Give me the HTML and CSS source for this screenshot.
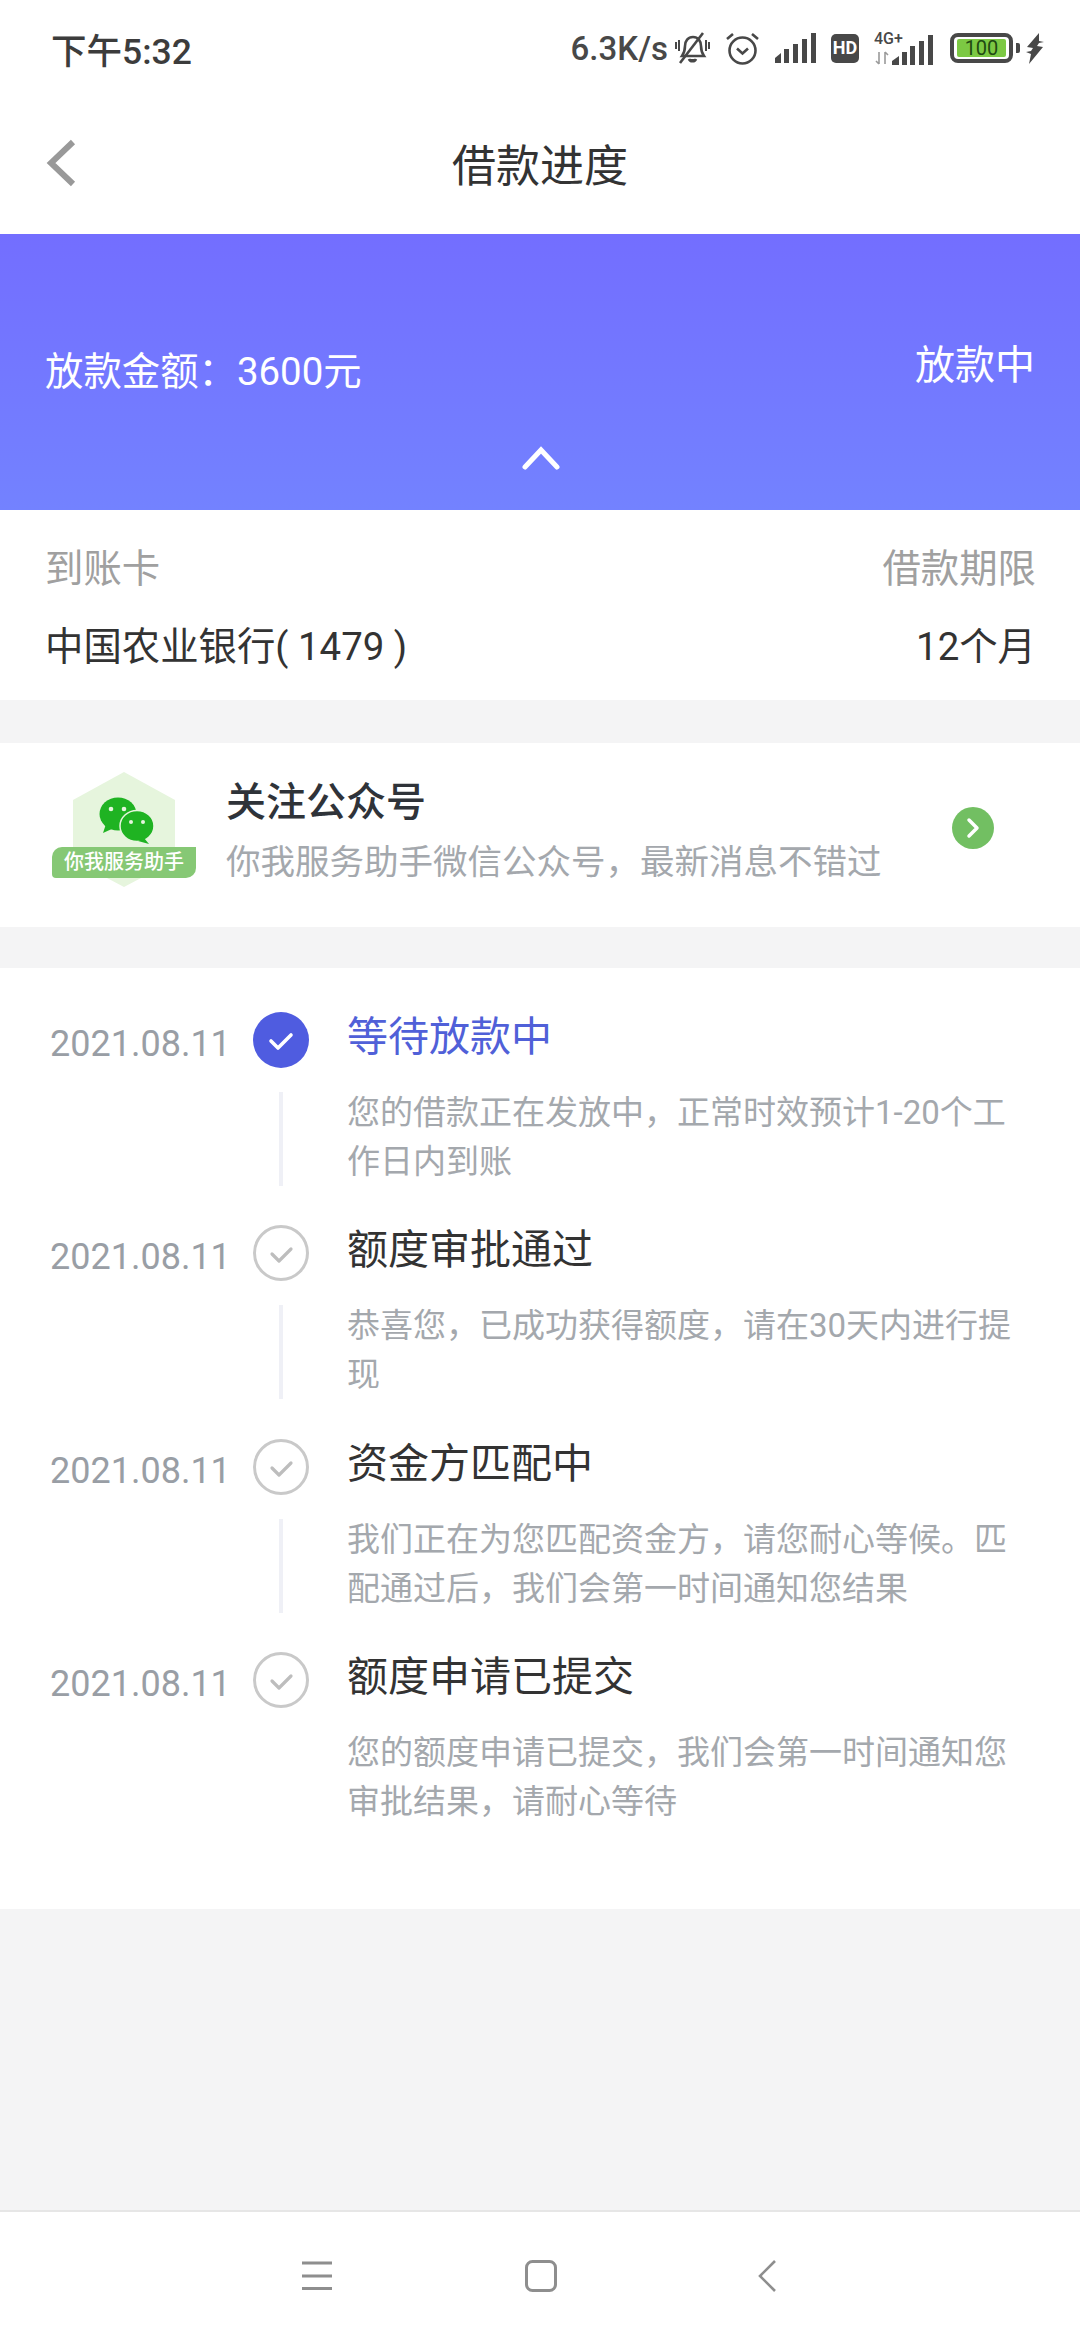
FILE: index.html
```html
<!DOCTYPE html>
<html>
<head>
  <meta charset="utf-8">
  <title>借款进度</title>
  <link rel="stylesheet" href="styles.css">
</head>
<body>
  <div class="page">

    <!-- status bar -->
    <div class="status">
      <span class="clock">下午5:32</span>
      <div class="status-right">
        <span class="speed">6.3K/s</span>
        <svg class="ico-bell" width="35" height="33" viewBox="0 0 35 33" fill="none" stroke="#484848" stroke-width="2.6">
          <path d="M7 24c2-3 3-5 3-10 0-5 3-9 8-9s8 4 8 9c0 5 1 7 3 10z"/>
          <path d="M14 27c1 3 6 3 7 0" fill="#484848"/>
          <path d="M28 1L5 31"/>
          <path d="M1 10v7M4 8v11M31 8v11M34 10v7" stroke-width="2"/>
        </svg>
        <svg class="ico-alarm" width="35" height="33" viewBox="0 0 35 33" fill="none" stroke="#484848" stroke-width="2.6">
          <circle cx="17.5" cy="18.5" r="13"/>
          <path d="M12 16.5l5.5 5 5.5-5"/>
          <path d="M2 7l6-5M33 7l-6-5"/>
        </svg>
        <svg class="ico-signal" width="41" height="30" viewBox="0 0 41 30" fill="#484848">
          <path d="M0 30v-5l6-5v10z"/>
          <rect x="9" y="16" width="5" height="14"/>
          <rect x="18" y="11" width="5" height="19"/>
          <rect x="27" y="6" width="5" height="24"/>
          <rect x="36" y="0" width="5" height="30"/>
        </svg>
        <svg class="ico-hd" width="28" height="29" viewBox="0 0 28 29">
          <rect width="28" height="29" rx="5" fill="#484848"/>
          <text x="14" y="20" class="hd-text">HD</text>
        </svg>
        <svg class="ico-net" width="59" height="33" viewBox="0 0 59 33" fill="#484848">
          <text x="0" y="12" class="net-text">4G+</text>
          <path d="M5 20v12M2 29l3 3M11 32V20M11 20l3 3" stroke="#9a9a9a" stroke-width="1.6" fill="none"/>
          <path d="M18 33v-4l7-5v9z"/>
          <rect x="28" y="20" width="5" height="13"/>
          <rect x="36" y="14" width="5" height="19"/>
          <rect x="45" y="9" width="5" height="24"/>
          <rect x="54" y="3" width="5" height="30"/>
        </svg>
        <div class="battery">
          <div class="battery-body"><span class="battery-level">100</span></div>
          <div class="battery-tip"></div>
        </div>
        <svg class="ico-bolt" width="18" height="31" viewBox="0 0 18 31" fill="#484848">
          <path d="M13 0L1 14l6 1-2 3-5 1 5 2-2 10L17 14l-6-1 2-3 5-1-5-1z"/>
        </svg>
      </div>
    </div>

    <!-- title -->
    <div class="nav">
      <svg class="nav-back" width="30" height="48" viewBox="0 0 30 48" fill="none" stroke="#999" stroke-width="6">
        <path d="M27 3L5 24l22 21"/>
      </svg>
      <span class="nav-title">借款进度</span>
    </div>

    <!-- amount -->
    <div class="hero">
      <div class="hero-row">
        <span class="hero-amount">放款金额：3600元</span>
        <span class="hero-state">放款中</span>
      </div>
      <svg class="hero-arrow" width="38" height="24" viewBox="0 0 38 24" fill="none" stroke="#fff" stroke-width="5" stroke-linecap="round">
        <path d="M3 21L19 4l16 17"/>
      </svg>
    </div>

    <div class="card-info">
      <div class="info-row info-label">
        <span>到账卡</span>
        <span>借款期限</span>
      </div>
      <div class="info-row info-value">
        <span>中国农业银行( 1479 )</span>
        <span>12个月</span>
      </div>
    </div>

    <!-- wechat banner -->
    <div class="follow">
      <svg class="follow-logo" width="144" height="115" viewBox="0 0 144 115">
        <path d="M72 0l51 28v60l-51 27-51-27V28z" fill="#e6f5dd"/>
        <ellipse cx="66" cy="42" rx="18.5" ry="16.5" fill="#1fb322"/>
        <path d="M54 52l-3 9 11-5z" fill="#1fb322"/>
        <circle cx="59" cy="37" r="2.3" fill="#e6f5dd"/>
        <circle cx="72" cy="37" r="2.3" fill="#e6f5dd"/>
        <ellipse cx="85" cy="54" rx="17" ry="15.5" fill="#1fb322" stroke="#e6f5dd" stroke-width="1.5"/>
        <path d="M92 66l5 6-11-3z" fill="#1fb322"/>
        <circle cx="79" cy="50" r="2" fill="#e6f5dd"/>
        <circle cx="91" cy="50" r="2" fill="#e6f5dd"/>
        <path d="M10 75h134v21a10 10 0 0 1-10 10H4a4 4 0 0 1-4-4V85a10 10 0 0 1 10-10z" fill="#86c875"/>
        <text x="72" y="97" class="logo-text">你我服务助手</text>
      </svg>
      <div class="follow-text">
        <div class="follow-title">关注公众号</div>
        <div class="follow-sub">你我服务助手微信公众号，最新消息不错过</div>
      </div>
      <svg class="follow-go" width="42" height="42" viewBox="0 0 42 42" fill="none">
        <circle cx="21" cy="21" r="21" fill="#72bf62"/>
        <path d="M17 13l8 8-8 8" stroke="#fff" stroke-width="3.5" stroke-linecap="round" stroke-linejoin="round"/>
      </svg>
    </div>

    <!-- progress -->
    <div class="steps">
      <div class="step step-active">
        <div class="step-date">2021.08.11</div>
        <div class="step-mark">
          <svg class="step-dot" width="56" height="56" viewBox="0 0 56 56" fill="none">
            <circle cx="28" cy="28" r="28" fill="#4f5ce0"/>
            <path d="M18 29l7 7 13-13" stroke="#fff" stroke-width="3.6" stroke-linecap="round" stroke-linejoin="round"/>
          </svg>
          <div class="step-line"></div>
        </div>
        <div class="step-body">
          <div class="step-title">等待放款中</div>
          <div class="step-desc">您的借款正在发放中，正常时效预计1-20个工作日内到账</div>
        </div>
      </div>

      <div class="step">
        <div class="step-date">2021.08.11</div>
        <div class="step-mark">
          <svg class="step-dot" width="56" height="56" viewBox="0 0 56 56" fill="none">
            <circle cx="28" cy="28" r="26.5" stroke="#c9c9c9" stroke-width="3"/>
            <path d="M19 29l7 7 12-12" stroke="#bdbdbd" stroke-width="3.2" stroke-linecap="round" stroke-linejoin="round"/>
          </svg>
          <div class="step-line"></div>
        </div>
        <div class="step-body">
          <div class="step-title">额度审批通过</div>
          <div class="step-desc">恭喜您，已成功获得额度，请在30天内进行提现</div>
        </div>
      </div>

      <div class="step">
        <div class="step-date">2021.08.11</div>
        <div class="step-mark">
          <svg class="step-dot" width="56" height="56" viewBox="0 0 56 56" fill="none">
            <circle cx="28" cy="28" r="26.5" stroke="#c9c9c9" stroke-width="3"/>
            <path d="M19 29l7 7 12-12" stroke="#bdbdbd" stroke-width="3.2" stroke-linecap="round" stroke-linejoin="round"/>
          </svg>
          <div class="step-line"></div>
        </div>
        <div class="step-body">
          <div class="step-title">资金方匹配中</div>
          <div class="step-desc">我们正在为您匹配资金方，请您耐心等候。匹配通过后，我们会第一时间通知您结果</div>
        </div>
      </div>

      <div class="step">
        <div class="step-date">2021.08.11</div>
        <div class="step-mark">
          <svg class="step-dot" width="56" height="56" viewBox="0 0 56 56" fill="none">
            <circle cx="28" cy="28" r="26.5" stroke="#c9c9c9" stroke-width="3"/>
            <path d="M19 29l7 7 12-12" stroke="#bdbdbd" stroke-width="3.2" stroke-linecap="round" stroke-linejoin="round"/>
          </svg>
        </div>
        <div class="step-body">
          <div class="step-title">额度申请已提交</div>
          <div class="step-desc">您的额度申请已提交，我们会第一时间通知您审批结果，请耐心等待</div>
        </div>
      </div>
    </div>

    <div class="spacer"></div>

    <!-- system buttons -->
    <div class="sysbar">
      <svg class="sys-menu" width="30" height="30" viewBox="0 0 30 30" fill="none" stroke="#8e8e8e" stroke-width="3">
        <path d="M0 2h30M0 15h30M0 27.5h30"/>
      </svg>
      <svg class="sys-home" width="32" height="32" viewBox="0 0 32 32" fill="none" stroke="#8e8e8e" stroke-width="3">
        <rect x="1.5" y="1.5" width="29" height="29" rx="6"/>
      </svg>
      <svg class="sys-back" width="18" height="32" viewBox="0 0 18 32" fill="none" stroke="#8e8e8e" stroke-width="2.6">
        <path d="M17 1L2 16l15 15"/>
      </svg>
    </div>

  </div>
</body>
</html>
```

FILE: styles.css
```css
* {
  box-sizing: border-box;
}

body {
  margin: 0;
  background-color: #f4f4f5;
  font-family: Roboto, "Noto Sans CJK SC", sans-serif;
  color: #333;
}

.page {
  width: 1080px;
  height: 2340px;
  display: flex;
  flex-direction: column;
  overflow: hidden;
}

/* status bar */
.status {
  height: 96px;
  padding: 0 36px 0 51px;
  background-color: #fff;
  display: flex;
  align-items: center;
  justify-content: space-between;
}

.clock {
  font-size: 35.5px;
  font-weight: 500;
  color: #3c3c3c;
}

.status-right {
  display: flex;
  align-items: center;
  flex: none;
}

.speed {
  padding-top: 2px;
  font-size: 33px;
  font-weight: 500;
  line-height: 40px;
  white-space: nowrap;
  color: #484848;
  margin-right: 7px;
}

.ico-alarm,
.ico-signal,
.ico-hd,
.ico-net {
  margin-left: 15px;
}

.hd-text {
  font-size: 18px;
  font-weight: 700;
  fill: #fff;
  text-anchor: middle;
}

.net-text {
  font-size: 16px;
  font-weight: 500;
}

.battery {
  margin-left: 17px;
  display: flex;
  align-items: center;
  gap: 3px;
}

.battery-body {
  width: 63px;
  height: 30px;
  padding: 2px 3px;
  border: 4px solid #484848;
  border-radius: 8px;
}

.battery-level {
  display: block;
  height: 18px;
  border-radius: 2px;
  background-color: #7cc943;
  font-size: 20px;
  line-height: 18px;
  text-align: center;
  color: #1f4a12;
}

.battery-tip {
  width: 4px;
  height: 10px;
  border-radius: 0 2px 2px 0;
  background-color: #484848;
}

.ico-bolt {
  margin-left: 6px;
}

/* title */
.nav {
  height: 138px;
  padding-bottom: 4px;
  background-color: #fff;
  display: flex;
  align-items: center;
  justify-content: center;
  position: relative;
}

.nav-back {
  position: absolute;
  left: 46px;
  top: 43px;
}

.nav-title {
  font-size: 44px;
  color: #333;
}

/* amount */
.hero {
  height: 276px;
  padding: 108px 45px 0;
  background: linear-gradient(#736eff, #7382ff);
  color: #fff;
  display: flex;
  flex-direction: column;
}

.hero-row {
  display: flex;
  justify-content: space-between;
  height: 60px;
}

.hero-amount {
  font-size: 38.4px;
  line-height: 60px;
}

.hero-state {
  font-size: 40px;
  line-height: 48px;
}

.hero-arrow {
  align-self: center;
  margin-top: 44px;
  margin-left: 2px;
}

.card-info {
  height: 190px;
  padding: 32px 44px 0 45px;
  background-color: #fff;
}

.info-row {
  display: flex;
  justify-content: space-between;
  font-size: 38.4px;
  line-height: 54px;
}

.info-label {
  color: #a0a0a0;
}

.info-value {
  margin-top: 24px;
  color: #333;
}

/* wechat banner */
.follow {
  height: 184px;
  margin-top: 43px;
  padding: 29px 86px 0 52px;
  background-color: #fff;
  display: flex;
  align-items: flex-start;
}

.logo-text {
  font-size: 20px;
  font-weight: 500;
  fill: #fff;
  text-anchor: middle;
}

.follow-text {
  margin-left: 30px;
  padding-top: 3px;
}

.follow-title {
  font-size: 40px;
  font-weight: 500;
  line-height: 56px;
  color: #2f3339;
}

.follow-sub {
  margin-top: 7px;
  font-size: 34.5px;
  line-height: 48px;
  color: #a4a8ad;
}

.follow-go {
  margin-left: auto;
  margin-top: 35px;
}

/* progress */
.steps {
  height: 941px;
  margin-top: 41px;
  padding-top: 42px;
  background-color: #fff;
}

.step {
  height: 213.3px;
  display: flex;
}

.step-date {
  width: 253px;
  padding: 9px 0 0 50px;
  font-size: 36px;
  line-height: 50px;
  color: #999ea5;
}

.step-mark {
  width: 56px;
  padding-top: 2px;
  display: flex;
  flex-direction: column;
  align-items: center;
}

.step-line {
  width: 4px;
  height: 94px;
  margin-top: 24px;
  background-color: #eff0f6;
}

.step-body {
  width: 672px;
  margin-left: 38px;
}

.step-title {
  font-size: 41px;
  line-height: 54px;
  color: #333;
}

.step-active .step-title {
  color: #5060d8;
}

.step-desc {
  margin-top: 24px;
  font-size: 33px;
  line-height: 49px;
  color: #a4a8ad;
}

.spacer {
  flex: 1;
}

/* system buttons */
.sysbar {
  height: 130px;
  padding: 0 0 0 302px;
  border-top: 2px solid #e6e6e6;
  background-color: #fff;
  display: flex;
  align-items: center;
}

.sys-home {
  margin-left: 193px;
}

.sys-back {
  margin-left: 201px;
}
```
